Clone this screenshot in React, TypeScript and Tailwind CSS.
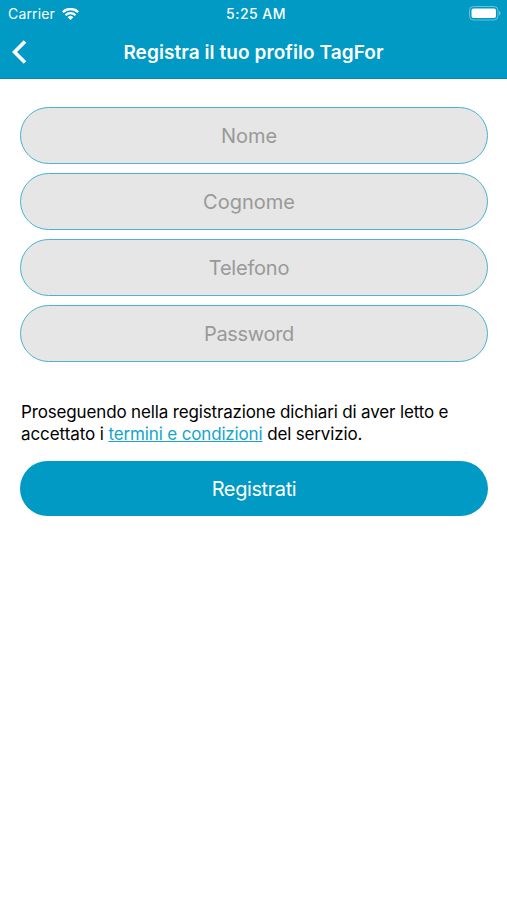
const fields = [
  { name: "nome", label: "Nome", type: "text", tracking: "tracking-normal" },
  { name: "cognome", label: "Cognome", type: "text", tracking: "tracking-normal" },
  { name: "telefono", label: "Telefono", type: "tel", tracking: "tracking-[-0.2px]" },
  { name: "password", label: "Password", type: "password", tracking: "tracking-[-0.3px]" },
];

function StatusBar() {
  return (
    <div className="grid h-[27px] grid-cols-3 items-center pl-2 pr-1.5 text-[14px]">
      <div className="flex items-center gap-[7px]">
        <span className="tracking-[0.15px]">Carrier</span>
        <svg className="h-3 w-[17px]" viewBox="0 0 17 12" fill="none">
          <path d="M.8 4.1a11.200 11.200 0 0 1 15.400 0" stroke="currentColor" strokeWidth="2.5" />
          <path d="M3.500 7.200a7.200 7.200 0 0 1 10 0" stroke="currentColor" strokeWidth="2.200" />
          <path d="M5.700 9.200a4 4 0 0 1 5.600 0L8.500 12z" fill="currentColor" />
        </svg>
      </div>
      <span className="pl-[3px] text-center text-[14px] font-medium leading-[18px] tracking-[0.45px]">
        5:25 AM
      </span>
      <svg className="h-[15px] w-8 justify-self-end" viewBox="0 0 32 15" fill="none">
        <rect x="0.5" y="0.5" width="28.5" height="13.5" rx="4" stroke="white" strokeOpacity="0.4" />
        <rect x="2.5" y="2.5" width="24.5" height="9.5" rx="2" fill="white" />
        <path d="M30 5c2 .7 2 3.8 0 4.500z" fill="white" fillOpacity="0.4" />
      </svg>
    </div>
  );
}

function Header() {
  return (
    <header className="h-[79px] border-b border-[#0789aa] bg-[#009ac4] text-white">
      <StatusBar />
      <div className="relative flex h-[51px] items-center justify-center pt-0.5">
        <button className="absolute left-3 top-[13px]" aria-label="Indietro">
          <svg className="h-6 w-[15px]" viewBox="0 0 15 24" fill="none">
            <path d="M13 1.5 2.5 12 13 22.5" stroke="currentColor" strokeWidth="3.7" />
          </svg>
        </button>
        <h1 className="text-[19px] font-semibold tracking-[0.08px]">Registra il tuo profilo TagFor</h1>
      </div>
    </header>
  );
}

export default function App() {
  return (
    <div className="min-h-[900px] bg-white font-['Inter','Liberation_Sans',sans-serif]">
      <Header />
      <form className="pl-5 pr-[19px] pt-7">
        <div className="flex flex-col gap-[9px]">
          {fields.map((field) => (
            <input
              key={field.name}
              name={field.name}
              type={field.type}
              placeholder={field.label}
              className={`h-[57px] w-full rounded-full border-[1.5px] border-[#4bb2d0] bg-[#e6e6e6] pr-[10px] text-center text-[20px] placeholder:text-[#999999] ${field.tracking}`}
            />
          ))}
        </div>
        <p className="mt-[39px] pl-px text-[17px] leading-[22px] tracking-[-0.15px] text-black">
          Proseguendo nella registrazione dichiari di aver letto e
          <br />
          <span className="tracking-[-0.08px]">accettato i </span>
          <a href="#termini" className="text-[#16a4cb] underline">
            termini e condizioni
          </a>{" "}
          del servizio.
        </p>
        <button
          type="button"
          className="mt-4 h-[55px] w-full rounded-full bg-[#009ac4] pt-px text-[20px] tracking-[-0.4px] text-white"
        >
          Registrati
        </button>
      </form>
    </div>
  );
}
